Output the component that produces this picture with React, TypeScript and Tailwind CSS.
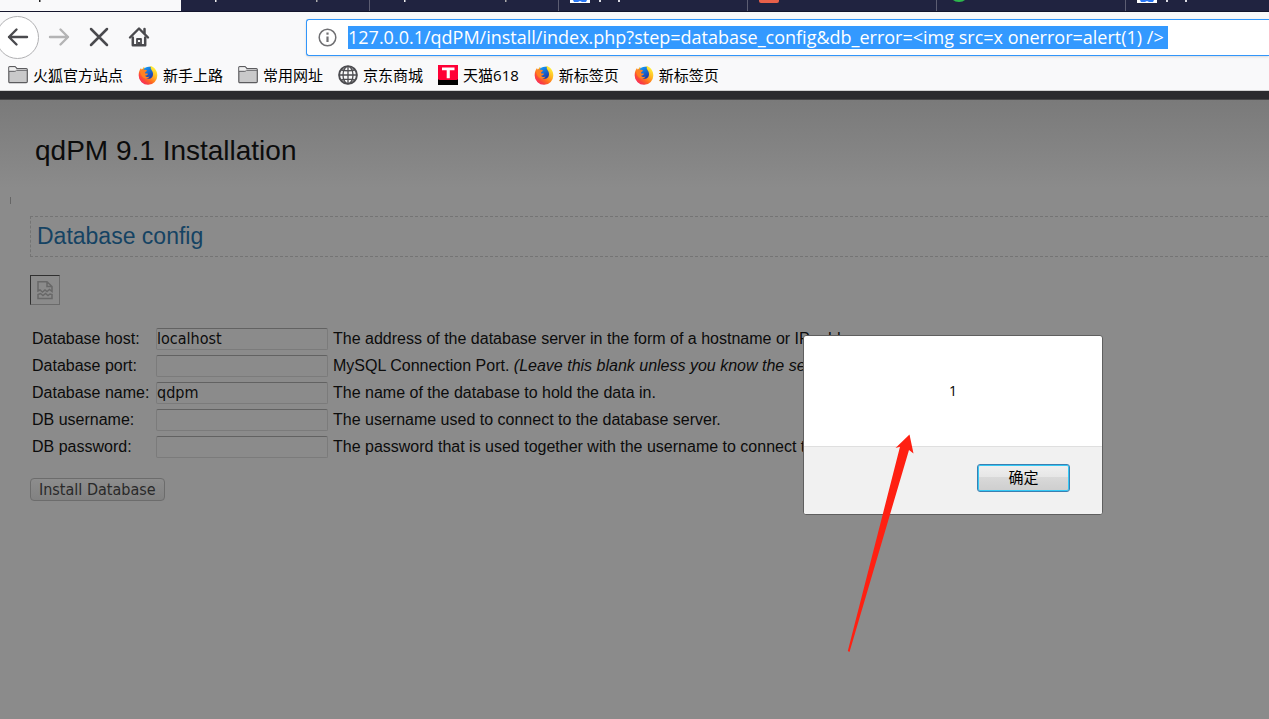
import React from "react";

const UI_FONT = "font-['Open_Sans','Noto_Sans_CJK_SC',sans-serif]";
const FIELD_FONT = "font-['DejaVu_Sans_Condensed','Open_Sans',sans-serif]";

function FolderIcon() {
  return (
    <svg width="20" height="20" viewBox="0 0 20 20" aria-hidden="true">
      <path d="M.8 16.5V2.6q0-.9.9-.9h5.2q.5 0 .8.4l1.3 1.6h9.3q1 0 1 1v11.9q0 1.1-1 1.1H1.8q-1 0-1-1.2z" fill="#c9c9ca" stroke="#5c5c5f" strokeWidth="1.2" />
      <path d="M1.3 5.9V2.3h5.6l1.7 2h10v1.6z" fill="#efefef" />
      <path d="M1 6.3h5.8q.6 0 1-.5t1-.5h10.4" fill="none" stroke="#5c5c5f" strokeWidth="1" />
    </svg>
  );
}

function FirefoxIcon() {
  return (
    <svg width="20" height="20" viewBox="0 0 20 20" aria-hidden="true">
      <defs>
        <linearGradient id="fx" x1="0.85" y1="0.1" x2="0.2" y2="0.95">
          <stop offset="0" stopColor="#fff13a" />
          <stop offset="0.35" stopColor="#ffb320" />
          <stop offset="0.65" stopColor="#ff6a20" />
          <stop offset="1" stopColor="#f0205a" />
        </linearGradient>
        <linearGradient id="fxb" x1="0" y1="0" x2="0.5" y2="1">
          <stop offset="0" stopColor="#12a5ff" />
          <stop offset="1" stopColor="#1c3fae" />
        </linearGradient>
      </defs>
      <path d="M13 1c4 1.800 6.300 5 6.300 9.300a9.300 9.300 0 0 1-18.600.5C.6 7.500 1.400 5 3 3l.7 2L6 1.800 7 4z" fill="url(#fx)" />
      <path d="M5.500 4.200C7 2.200 10 1 13 2c-1 1.200.3 2.300 1.300 4.200 1.700 3.300.4 7.500-3.600 7.600C8 13.900 5.600 12 5.500 9.500z" fill="url(#fxb)" />
      <path d="M2.500 5c1-1 2.600-1 3.700-.2 1 0 2 .1 2.800.6-.4 1.200-1.800 1.500-2.100 2.500.8.800 2 .3 3.100.9-.4 1.500-2 1.600-3 1.900 1 1.300 3 1.500 4.600.9-1.100 2.200-4.400 2.800-6.400.9C3 10.500 2.200 8 2.500 5z" fill="#ff8122" />
      <path d="M1.200 7.500c-1.300 6 3 11 8.300 11.500-4.500-1.600-7.500-6-8.300-11.500z" fill="#ff3b4e" />
    </svg>
  );
}

function GlobeIcon() {
  return (
    <svg width="20" height="20" viewBox="0 0 20 20" fill="none" stroke="#4c4c50" strokeWidth="1.3" aria-hidden="true">
      <circle cx="10" cy="10" r="8.900" strokeWidth="1.900" />
      <ellipse cx="10" cy="10" rx="5" ry="8.700" />
      <path d="M1.500 10h17M3.300 5q6.700 1.600 13.400 0M3.300 15q6.700-1.600 13.400 0M10 1v18" />
    </svg>
  );
}

function TmallIcon() {
  return (
    <svg width="20" height="20" viewBox="0 0 20 20" aria-hidden="true">
      <path d="M0 0h20v20H0z" fill="#000" />
      <path d="M0 0h20v13.500q0 1.500-2 1.500H2q-2 0-2-1.500z" fill="#ff0036" />
      <path d="M4 2.500h12.500v2.700h-4.700v8.100H8.700V5.200H4z" fill="#fff" />
    </svg>
  );
}

const bookmarks = [
  { label: "火狐官方站点", Icon: FolderIcon },
  { label: "新手上路", Icon: FirefoxIcon },
  { label: "常用网址", Icon: FolderIcon },
  { label: "京东商城", Icon: GlobeIcon },
  { label: "天猫618", Icon: TmallIcon },
  { label: "新标签页", Icon: FirefoxIcon },
  { label: "新标签页", Icon: FirefoxIcon },
];

function TabPeek({ children }: { children?: React.ReactNode }) {
  return (
    <div className="h-3 w-[189px] shrink-0 border-r border-[#5c5d72]">
      <svg width="188" height="12" viewBox="0 0 188 12" aria-hidden="true">{children}</svg>
    </div>
  );
}

function PawPeek() {
  return (
    <>
      <path d="M11 0h20v3H11z" fill="#fff" />
      <path d="M14 0h14l-1 2h-4l-2-1-2 1h-4z" fill="#2b78f5" />
      <path d="M40 0h2v2h-2zM59 0h2v2h-2z" fill="#dcdce4" />
    </>
  );
}

function TabStrip() {
  return (
    <div className="flex h-3 overflow-hidden border-b border-[#14152c] bg-[#202340]">
      <div className="h-3 w-[181px] shrink-0 bg-[#f9f9fa]">
        <svg width="181" height="12" viewBox="0 0 181 12" aria-hidden="true">
          <path d="M39 0h1.500v2H39z" fill="#222" />
        </svg>
      </div>
      <TabPeek>
        <path d="M34 0h1.500v2H34z" fill="#eee" />
        <path d="M135 0h1.500v2H135z" fill="#aaa" />
      </TabPeek>
      <TabPeek>
        <path d="M34 0h1.500v2H34z" fill="#eee" />
        <path d="M135 0h1.500v2H135z" fill="#aaa" />
      </TabPeek>
      <TabPeek><PawPeek /></TabPeek>
      <TabPeek>
        <path d="M11 0h20v1q0 2-2 2H13q-2 0-2-2z" fill="#e8604a" />
      </TabPeek>
      <TabPeek>
        <path d="M16 0h12q-2 2-6 2t-6-2z" fill="#2db84d" />
      </TabPeek>
      <TabPeek><PawPeek /></TabPeek>
    </div>
  );
}

function NavBar() {
  return (
    <div className="flex h-[50px] items-center">
      <div className="flex w-[306px] shrink-0 items-center">
        <button aria-label="Back" className="-ml-1 flex size-[43px] items-center justify-center rounded-full border border-[#b1b1b3] bg-white">
          <svg width="22" height="20" viewBox="0 0 22 20" fill="none" stroke="#4a4a4e" strokeWidth="2.400" strokeLinecap="round" strokeLinejoin="round">
            <path d="M20 10H2M9.500 2.500 2 10l7.500 7.500" />
          </svg>
        </button>
        <button aria-label="Forward" className="ml-[9px] flex w-[22px] justify-center">
          <svg width="22" height="20" viewBox="0 0 22 20" fill="none" stroke="#b4b4b5" strokeWidth="2.400" strokeLinecap="round" strokeLinejoin="round">
            <path d="M2 10h18M12.500 2.500 20 10l-7.500 7.500" />
          </svg>
        </button>
        <button aria-label="Stop" className="ml-[19px] flex w-5 justify-center">
          <svg width="20" height="20" viewBox="0 0 20 20" stroke="#4a4a4e" strokeWidth="2.500" strokeLinecap="round">
            <path d="M2 2l16 16M18 2 2 18" />
          </svg>
        </button>
        <button aria-label="Home" className="ml-[19px] flex w-[22px] justify-center">
          <svg width="22" height="22" viewBox="0 0 22 22" fill="none" stroke="#4a4a4e" strokeLinecap="round" strokeLinejoin="round">
            <path d="M2 11.500 11 2.500l9 9" strokeWidth="2.400" />
            <path d="M4.800 11.500v7.700h12.400v-7.700M16.500 3v4" strokeWidth="2.500" />
            <path d="M9 19v-6h4v6" strokeWidth="1.800" />
            <path d="M10 16h2v3h-2z" fill="#4a4a4e" stroke="none" />
          </svg>
        </button>
      </div>
      <div className="flex h-[37px] min-w-0 flex-1 items-center rounded-l-[3px] border border-r-0 border-[#3296fa] bg-white pl-[11px] shadow-sm">
        <svg width="19" height="19" viewBox="0 0 19 19" fill="none" stroke="#707073" aria-hidden="true" className="mr-[11px] shrink-0">
          <circle cx="9.500" cy="9.500" r="8.300" strokeWidth="1.500" />
          <path d="M9.500 8.500v5.500" strokeWidth="2.200" />
          <path d="M9.500 4.500v2.200" strokeWidth="2.200" />
        </svg>
        <input
          aria-label="Address"
          defaultValue="127.0.0.1/qdPM/install/index.php?step=database_config&db_error=<img src=x onerror=alert(1) />"
          className={"h-[23px] field-sizing-content bg-[#3399ff] pr-1 text-[18px] leading-[23px] text-white outline-none " + UI_FONT}
        />
      </div>
    </div>
  );
}

const fields = [
  { id: "host", label: "Database host:", value: "localhost", note: "The address of the database server in the form of a hostname or IP address." },
  { id: "port", label: "Database port:", value: "", note: "MySQL Connection Port. ", hint: "(Leave this blank unless you know the server)" },
  { id: "name", label: "Database name:", value: "qdpm", note: "The name of the database to hold the data in." },
  { id: "user", label: "DB username:", value: "", note: "The username used to connect to the database server." },
  { id: "pass", label: "DB password:", value: "", note: "The password that is used together with the username to connect to the server." },
];

function InstallPage() {
  return (
    <main className="flex-1 bg-[#8b8b8b] bg-[linear-gradient(#7a7a7a,#8b8b8b_88px)] font-['Liberation_Sans',Arial,sans-serif] text-[#0c0c0c]">
      <h1 className="pt-[35px] pl-[35px] text-[28px] leading-[32px]">qdPM 9.1 Installation</h1>
      <div className="mt-[30px] ml-[10px] h-[7px] w-px bg-[#666]" />
      <div className="mt-3 pl-[30px]">
        <h2 className="mr-px h-[41px] border border-r-0 border-dashed border-[#747474] pl-[6px] text-[23px] leading-[38px] text-[#154363]">Database config</h2>
        <div role="img" aria-label="Broken image" className="mt-[18px] flex size-[30px] items-center justify-center border border-[#6b6b6b] border-t-[#303030] border-l-[#303030]">
          <svg width="18" height="20" viewBox="0 0 18 20" fill="none" stroke="#686868" strokeWidth="1.500" aria-hidden="true">
            <path d="M2 11V1.700h9l5 4.800v5l-2.500-2-2.500 2-2-1.500-2.500 2-2.500-2zM11 1.700v4.800h5" />
            <path d="M2 18.500v-4l2.500-1 2.500 2 2.500-2 2.500 2 2-1.500 2 .5v4z" />
          </svg>
        </div>
        <table className="mt-5 text-[16px] leading-[19px]">
          <tbody>
            {fields.map((f) => (
              <tr key={f.id} className="h-[27px]">
                <td className="w-[126px] pl-[2px] whitespace-nowrap"><label htmlFor={f.id}>{f.label}</label></td>
                <td className="w-[177px]">
                  <input
                    id={f.id}
                    type={f.id === "pass" ? "password" : "text"}
                    defaultValue={f.value}
                    className={"block h-[22px] w-[172px] rounded-[2px] border border-[#7b7b7b] border-t-[#626262] bg-transparent text-[16px] leading-[20px] " + FIELD_FONT}
                  />
                </td>
                <td className="whitespace-nowrap">{f.note}{f.hint && <em>{f.hint}</em>}</td>
              </tr>
            ))}
          </tbody>
        </table>
        <button className={"mt-[18px] h-[23px] rounded-[4px] border border-[#6c6c6c] bg-linear-to-b from-[#8d8d8d] to-[#828282] px-2 text-[16px] leading-[21px] text-[#292929] " + FIELD_FONT}>
          Install Database
        </button>
      </div>
    </main>
  );
}

function AlertDialog() {
  return (
    <div role="alertdialog" aria-label="Alert" className={"absolute top-[335px] left-[803px] w-[300px] rounded-[3px] border border-[#5f5f5f] bg-white text-[15px] text-black " + UI_FONT}>
      <p className="flex h-[110px] items-center justify-center pb-[2px] text-[14px]">1</p>
      <div className="flex h-[68px] justify-end rounded-b-[2px] border-t border-[#dfdfdf] bg-[#f1f1f1] pt-[17px] pr-8">
        <button className="h-7 w-[93px] rounded-[3px] border border-[#3c7fb1] bg-[linear-gradient(#f0f0f0,#e6e6e6_45%,#d9d9d9_46%,#cecece)] pb-[2px] leading-[24px] inset-ring inset-ring-[#35c9f5]">
          确定
        </button>
      </div>
    </div>
  );
}

export default function App() {
  return (
    <div className="relative flex min-h-screen flex-col overflow-hidden">
      <header className="border-b border-[#d0d0d2] bg-[#f9f9fa]">
        <TabStrip />
        <NavBar />
        <nav aria-label="Bookmarks" className={"flex h-7 gap-[15px] pl-2 " + UI_FONT}>
          {bookmarks.map(({ label, Icon }, i) => (
            <a key={i} href="#" className="flex h-[26px] items-center gap-[5px] text-[15px] leading-[20px] whitespace-nowrap text-black">
              <Icon />
              {label}
            </a>
          ))}
        </nav>
      </header>
      <div className="h-2 bg-[#2a2a2e]" />
      <div className="h-px bg-[#444446]" />
      <InstallPage />
      <AlertDialog />
      <svg width="72" height="222" viewBox="844 432 72 222" aria-hidden="true" className="pointer-events-none absolute top-[432px] left-[844px]">
        <path d="M909.500 434.500 895.500 448l4.500-1.200L847.800 651l1.700 1L909 450l4.500 3.500z" fill="#ff2012" />
      </svg>
    </div>
  );
}
